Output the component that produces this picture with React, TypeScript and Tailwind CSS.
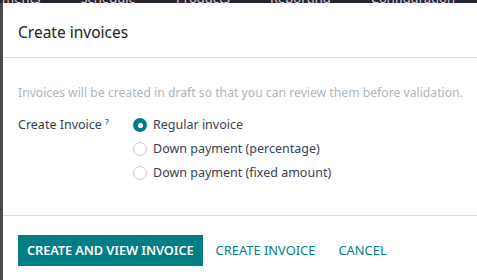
const FONT = { fontFamily: '"Noto Sans", "Open Sans", sans-serif' }

const OPTIONS = [
  { label: 'Regular invoice', checked: true },
  { label: 'Down payment (percentage)', checked: false },
  { label: 'Down payment (fixed amount)', checked: false },
]

function Radio({ checked }: { checked: boolean }) {
  if (checked)
    return (
      <span className="w-[14px] h-[14px] rounded-full bg-[#017e84] flex items-center justify-center shrink-0">
        <span className="w-[5px] h-[5px] rounded-full bg-white" />
      </span>
    )
  return <span className="w-[14px] h-[14px] rounded-full border border-[#c6c9cd] bg-white shrink-0" />
}

export default function App() {
  return (
    <div className="w-[477px] h-[280px] bg-[#1f1a22] overflow-hidden flex flex-col" style={FONT}>
      {/* navbar peeking behind the dialog */}
      <div className="h-[3px] overflow-hidden bg-[#2a2330] shrink-0">
        <div className="flex gap-10 pl-[2px] -mt-[11px] text-[13px] text-[#d7d2da] whitespace-nowrap">
          <span>ments</span><span>Schedule</span><span>Products</span><span>Reporting</span><span>Configuration</span>
        </div>
      </div>
      <div className="flex flex-1">
        <div className="w-[3px] bg-[#4a4a4e] shrink-0" />
        <div className="flex-1 bg-white flex flex-col">
          <div className="h-[55px] border-b border-[#d8dadd] flex items-center pl-[15px]">
            <h1 className="text-[15.5px] text-[#212529] leading-none mt-[5px]">Create invoices</h1>
          </div>
          <div className="px-[15px] pt-[26px] h-[158px] border-b border-[#d8dadd]">
            <p className="text-[12.2px] text-[#adb5bd] whitespace-nowrap leading-[18px]">
              Invoices will be created in draft so that you can review them before validation.
            </p>
            <div className="flex mt-[11px]">
              <div className="w-[115px] text-[12.5px] text-[#374151] leading-[24px]">
                Create Invoice<sup className="text-[#017e84] text-[9px] ml-[3px] font-semibold">?</sup>
              </div>
              <div className="flex flex-col">
                {OPTIONS.map(o => (
                  <div key={o.label} className="flex items-center gap-[6px] h-[24px] text-[12.5px] text-[#374151]">
                    <Radio checked={o.checked} />
                    <span>{o.label}</span>
                  </div>
                ))}
              </div>
            </div>
          </div>
          <div className="flex items-center pl-[15px] pt-[19px]">
            <button className="h-[31px] px-[9px] bg-[#017e84] text-white text-[12.8px] font-semibold uppercase tracking-[-0.1px]">
              Create and view invoice
            </button>
            <button className="h-[31px] ml-[4px] px-[9px] text-[#017e84] text-[12.9px] uppercase">Create invoice</button>
            <button className="h-[31px] ml-[4px] px-[10px] text-[#017e84] text-[12.9px] uppercase">Cancel</button>
          </div>
        </div>
      </div>
    </div>
  )
}
